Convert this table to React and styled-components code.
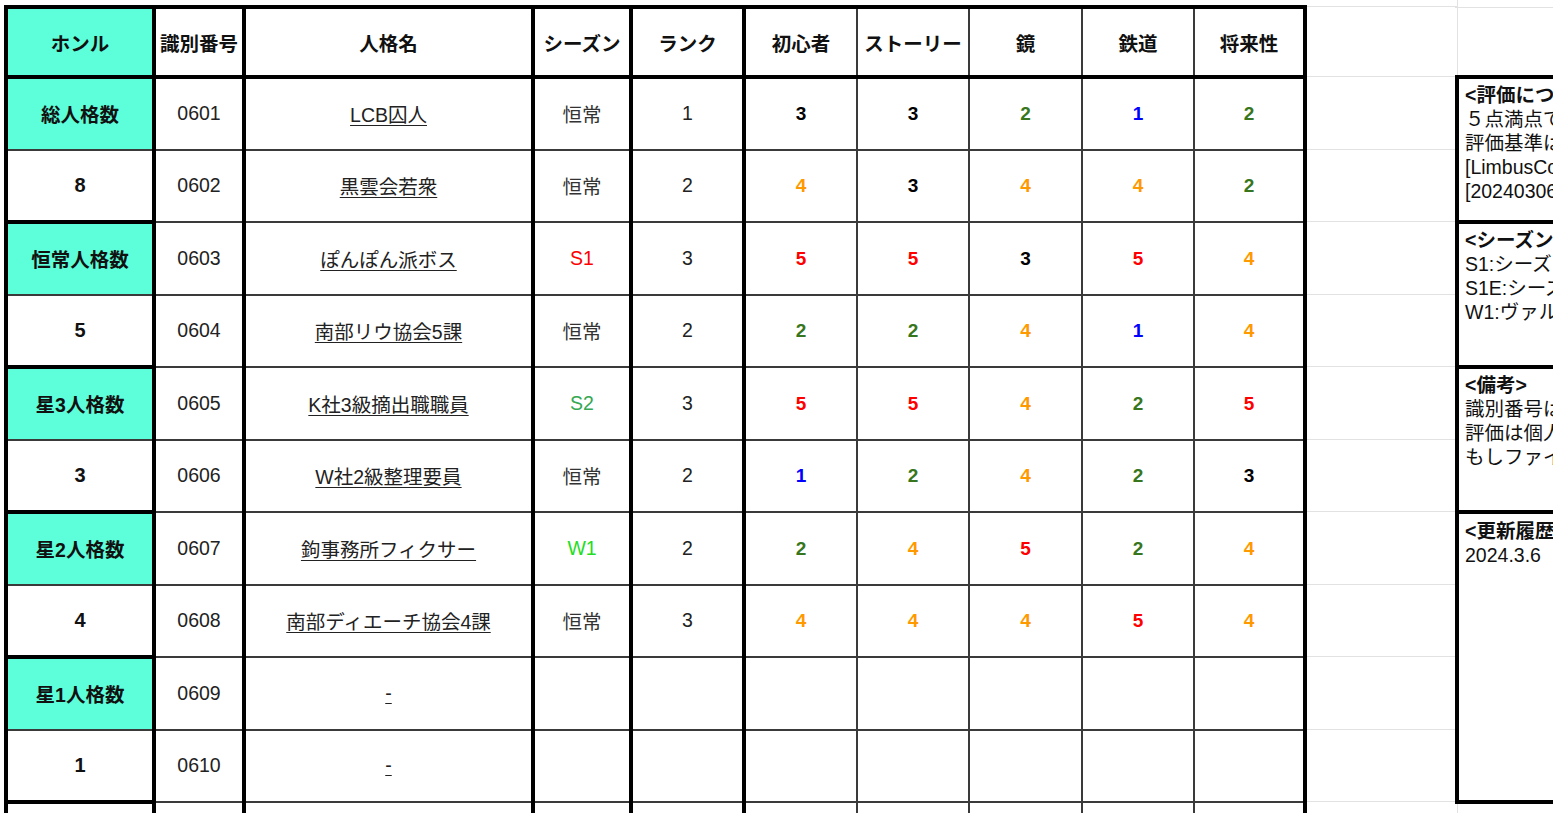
import React from 'react'
import styled, { createGlobalStyle } from 'styled-components'

const GlobalStyle = createGlobalStyle`
  html, body {
    margin: 0;
    padding: 0;
    background: #fff;
    overflow: hidden;
  }
  body {
    font-family: "Liberation Sans", "Noto Sans CJK JP", sans-serif;
    color: #111;
  }
`

const colWidths = [148, 90, 289, 98, 113, 113, 112, 113, 112, 111]
const headers = ['ホンル', '識別番号', '人格名', 'シーズン', 'ランク', '初心者', 'ストーリー', '鏡', '鉄道', '将来性']

const scoreColors = { 1: '#0000ff', 2: '#38761d', 3: '#000000', 4: '#ff9900', 5: '#ff0000' }
const seasonColors = { '恒常': '#333333', S1: '#ff0000', S2: '#34a853', W1: '#22dd22' }

const summary = [
  ['総人格数', 8],
  ['恒常人格数', 5],
  ['星3人格数', 3],
  ['星2人格数', 4],
  ['星1人格数', 1],
]

const rows = [
  { id: '0601', name: 'LCB囚人', season: '恒常', rank: 1, scores: [3, 3, 2, 1, 2] },
  { id: '0602', name: '黒雲会若衆', season: '恒常', rank: 2, scores: [4, 3, 4, 4, 2] },
  { id: '0603', name: 'ぽんぽん派ボス', season: 'S1', rank: 3, scores: [5, 5, 3, 5, 4] },
  { id: '0604', name: '南部リウ協会5課', season: '恒常', rank: 2, scores: [2, 2, 4, 1, 4] },
  { id: '0605', name: 'K社3級摘出職職員', season: 'S2', rank: 3, scores: [5, 5, 4, 2, 5] },
  { id: '0606', name: 'W社2級整理要員', season: '恒常', rank: 2, scores: [1, 2, 4, 2, 3] },
  { id: '0607', name: '鉤事務所フィクサー', season: 'W1', rank: 2, scores: [2, 4, 5, 2, 4] },
  { id: '0608', name: '南部ディエーチ協会4課', season: '恒常', rank: 3, scores: [4, 4, 4, 5, 4] },
  { id: '0609', name: '-', season: '', rank: '', scores: [] },
  { id: '0610', name: '-', season: '', rank: '', scores: [] },
  { id: '', name: '', season: '', rank: '', scores: [] },
]

const notes = [
  { h: 141, title: '<評価について>', lines: ['５点満点で評価しています', '評価基準は以下の通りです', '[LimbusCompany攻略]', '[20240306時点の評価]'] },
  { h: 145, title: '<シーズン>', lines: ['S1:シーズン1', 'S1E:シーズン1イベント', 'W1:ヴァルプルギスの夜1'] },
  { h: 145, title: '<備考>', lines: ['識別番号は公式の番号です', '評価は個人の主観です', 'もしファイルに誤りがあれば'] },
  { h: 290, title: '<更新履歴>', lines: ['2024.3.6'] },
]

const gridHeights = [7, 70, 72.5, 72.5, 72.5, 72.5, 72.5, 72.5, 72.5, 72.5, 72.5, 72.5, 72.5]

const Page = styled.div`
  display: flex;
  align-items: flex-start;
  padding-left: 4px;
  min-height: 813px;
`

const Table = styled.table`
  border-collapse: collapse;
  table-layout: fixed;
  width: 1303px;
  margin-top: 5px;
  border-top: 4px solid #000;
  flex-shrink: 0;
`

const Row = styled.tr`
  height: ${p => p.$h}px;
`

const Cell = styled.td`
  padding: 0;
  text-align: center;
  vertical-align: middle;
  font-size: 19.5px;
  white-space: nowrap;
  border-left: ${p => (p.$col <= 5 ? '4px solid #000' : '2px solid #3a3a3a')};
  border-right: ${p => (p.$col === 9 ? '4px solid #000' : 'none')};
  border-bottom: ${p => (p.$thickBottom ? '4px solid #000' : '2px solid #3a3a3a')};
  background: ${p => (p.$teal ? '#5cffda' : '#fff')};
  color: #222;
`

const HeadCell = styled(Cell).attrs({ as: 'th' })`
  font-weight: bold;
  color: #111;
`

const Label = styled.span`
  font-weight: bold;
  color: #111;
`

const Count = styled.span`
  font-weight: bold;
  font-size: 20px;
  color: #111;
`

const Name = styled.span`
  text-decoration: underline;
  text-underline-offset: 3px;
  color: #222;
`

const Season = styled.span`
  color: ${p => seasonColors[p.$s] || '#333'};
`

const Score = styled.span`
  font-weight: bold;
  font-size: 19px;
  color: ${p => scoreColors[p.$v]};
`

const GapColumn = styled.div`
  width: 150px;
  flex-shrink: 0;
  border-right: 1px solid #e2e2e2;
  display: flex;
  flex-direction: column;
`

const GridCell = styled.div`
  height: ${p => p.$h}px;
  box-sizing: border-box;
  border-bottom: 1px solid #e2e2e2;
`

const PanelColumn = styled.div`
  margin-left: -3px;
  width: 420px;
  flex-shrink: 0;
  display: flex;
  flex-direction: column;
`

const TopSpacer = styled.div`
  height: 75px;
  box-sizing: border-box;
  border-top: 7px solid transparent;
  background: linear-gradient(#e2e2e2, #e2e2e2) 0 0 / 100% 1px no-repeat;
`

const Panel = styled.div`
  border: 4px solid #000;
  display: flex;
  flex-direction: column;
  background: #fff;
`

const Note = styled.section`
  box-sizing: border-box;
  height: ${p => p.$h}px;
  padding: ${p => (p.$last ? '5px' : '4px')} 6px 0;
  border-top: ${p => (p.$first ? 'none' : '4px solid #000')};
  font-size: 19.5px;
  line-height: 24px;
  white-space: nowrap;
  overflow: hidden;
  color: #111;
`

const NoteTitle = styled.div`
  font-weight: bold;
`

const App = () => {
  return (
    <>
      <GlobalStyle />
      <Page>
        <Table>
          <colgroup>
            {colWidths.map((w, i) => (
              <col key={i} style={{ width: w }} />
            ))}
          </colgroup>
          <thead>
            <Row $h={70}>
              {headers.map((h, i) => (
                <HeadCell key={h} $col={i} $thickBottom $teal={i === 0}>
                  {h}
                </HeadCell>
              ))}
            </Row>
          </thead>
          <tbody>
            {rows.map((r, ri) => {
              const group = summary[Math.floor(ri / 2)]
              const isLabel = ri % 2 === 0
              return (
                <Row key={ri} $h={72.5}>
                  <Cell $col={0} $teal={group && isLabel} $thickBottom={group && !isLabel}>
                    {group && (isLabel ? <Label>{group[0]}</Label> : <Count>{group[1]}</Count>)}
                  </Cell>
                  <Cell $col={1}>{r.id}</Cell>
                  <Cell $col={2}>{r.name && <Name>{r.name}</Name>}</Cell>
                  <Cell $col={3}>
                    <Season $s={r.season}>{r.season}</Season>
                  </Cell>
                  <Cell $col={4}>{r.rank}</Cell>
                  {[0, 1, 2, 3, 4].map(k => (
                    <Cell key={k} $col={5 + k}>
                      {r.scores[k] && <Score $v={r.scores[k]}>{r.scores[k]}</Score>}
                    </Cell>
                  ))}
                </Row>
              )
            })}
          </tbody>
        </Table>

        <GapColumn>
          {gridHeights.map((h, i) => (
            <GridCell key={i} $h={h} />
          ))}
        </GapColumn>

        <PanelColumn>
          <TopSpacer />
          <Panel>
            {notes.map((n, i) => (
              <Note key={n.title} $h={n.h} $first={i === 0} $last={i === notes.length - 1}>
                <NoteTitle>{n.title}</NoteTitle>
                {n.lines.map(l => (
                  <div key={l}>{l}</div>
                ))}
              </Note>
            ))}
          </Panel>
        </PanelColumn>
      </Page>
    </>
  )
}

export default App
